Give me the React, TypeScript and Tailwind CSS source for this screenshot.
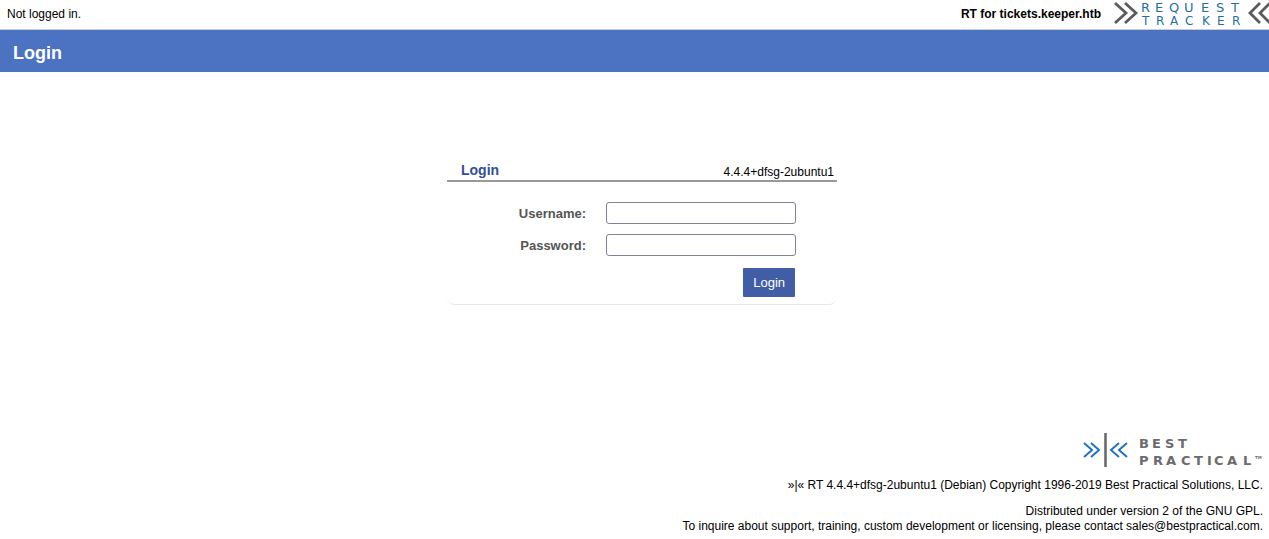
function RequestTrackerLogo() {
  return (
    <svg className="block" width="155" height="29" viewBox="0 0 155 29" role="img" aria-label="Request Tracker">
      <g fill="none" stroke="#5b5b5d" strokeWidth="2.8">
        <path d="M1 3 L12 13 L1 23 M11 3 L22 13 L11 23" />
        <path d="M146 3 L136 13 L146 23 M156 3 L146 13 L156 23" />
      </g>
      <g fill="#1f6fa3" fontFamily="'DejaVu Sans', sans-serif">
        <text y="12" fontSize="13" x="27 41 55 70 87 102 117">REQUEST</text>
        <text y="25" fontSize="12" x="28 42 56 71 88 103 118">TRACKER</text>
      </g>
    </svg>
  );
}

function BestPracticalLogo() {
  return (
    <svg className="block" width="180" height="36" viewBox="0 0 180 36" role="img" aria-label="Best Practical">
      <g fill="none" stroke="#1f72c8" strokeWidth="2">
        <path d="M1 11 L9 18 L1 25 M8 11 L16 18 L8 25" />
        <path d="M36 11 L28 18 L36 25 M44 11 L36 18 L44 25" />
      </g>
      <path d="M22.500 1 V35" stroke="#6b6b6d" strokeWidth="2.6" />
      <g fill="#6b6b6d" fontFamily="'DejaVu Sans', sans-serif" fontSize="13" fontWeight="bold">
        <text y="16" x="56 69 82 95">BEST</text>
        <text y="33" x="56 70 83 98 111 124 131 144 160">PRACTICAL</text>
        <text y="27" x="172" fontSize="4">TM</text>
      </g>
    </svg>
  );
}

function Field({ id, label, type }: { id: string; label: string; type: string }) {
  return (
    <div className="flex items-center gap-5">
      <label htmlFor={id} className="w-[139px] text-right text-[13px] font-bold text-[#555]">
        {label}
      </label>
      <input id={id} name={id} type={type} className="h-[22px] w-[190px] rounded-[3px] border border-[#858194] bg-white px-1 text-[13px]" />
    </div>
  );
}

export default function App() {
  return (
    <div className="bg-white font-['Liberation_Sans',Arial,sans-serif] text-[12px] leading-[15px] text-black">
      <header>
        <div className="flex h-[29px] items-center justify-between pl-[7px]">
          <span>Not logged in.</span>
          <div className="flex items-center gap-[13px]">
            <span className="font-bold">RT for tickets.keeper.htb</span>
            <RequestTrackerLogo />
          </div>
        </div>
        <div className="border-t border-[#ccc] bg-[#4c72c2] px-[13px] pt-[13px] pb-[8px]">
          <h1 className="text-[18px] leading-[21px] font-bold text-white">Login</h1>
        </div>
      </header>

      <main className="flex justify-center pt-[89px] pl-[15px]">
        <form className="w-[390px] rounded-lg border-b border-[#e8e8e8]" onSubmit={(event) => event.preventDefault()}>
          <div className="flex items-end justify-between border-b-2 border-[#999] pr-[3px] pl-[14px]">
            <h2 className="pb-px text-[14px] leading-[18px] font-bold text-[#334f99]">Login</h2>
            <span>4.4.4+dfsg-2ubuntu1</span>
          </div>
          <div className="flex flex-col gap-[10px] pt-5">
            <Field id="user" label="Username:" type="text" />
            <Field id="pass" label="Password:" type="password" />
          </div>
          <div className="flex justify-end pt-3 pr-[42px] pb-[7px]">
            <button type="submit" className="h-[29px] rounded-[1px] bg-[#415da6] px-[10px] text-[13px] text-white">
              Login
            </button>
          </div>
        </form>
      </main>

      <footer className="flex flex-col items-end pt-[127px] pr-[6px] pb-[5px] text-right">
        <BestPracticalLogo />
        <p className="pt-[10px]">»|« RT 4.4.4+dfsg-2ubuntu1 (Debian) Copyright 1996-2019 Best Practical Solutions, LLC.</p>
        <p className="pt-[11px]">
          Distributed under version 2 of the GNU GPL.
          <br />
          To inquire about support, training, custom development or licensing, please contact{" "}
          <a href="mailto:sales@bestpractical.com">sales@bestpractical.com</a>.
        </p>
      </footer>
    </div>
  );
}
